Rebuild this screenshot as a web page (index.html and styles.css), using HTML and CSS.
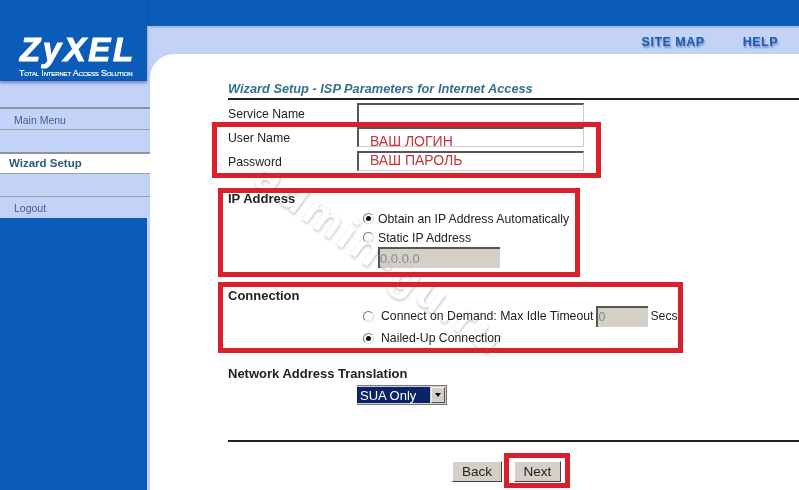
FILE: index.html
```html
<!DOCTYPE html>
<html lang="en">

<head>
    <meta charset="UTF-8">
    <meta name="viewport" content="width=device-width, initial-scale=1.0">
    <title>Wizard Setup</title>
    <link rel="stylesheet" href="styles.css">
</head>

<body>
    <div class="page">
        <aside class="side">
            <div class="logo">
                <div class="logoName">ZyXEL</div>
                <div class="logoSub">Total Internet Access Solution</div>
            </div>
            <div class="menu">
                <div class="item first">Main Menu</div>
                <div class="gap"></div>
                <div class="item current">Wizard Setup</div>
                <div class="gap"></div>
                <div class="item last">Logout</div>
            </div>
            <div class="sideFill"></div>
        </aside>

        <div class="right">
            <div class="topBar"></div>
            <div class="linkBar">
                <span class="topLink">SITE MAP</span>
                <span class="topLink">HELP</span>
            </div>
            <main class="content">
                <h1 class="title">Wizard Setup - ISP Parameters for Internet Access</h1>

                <div class="row rowService">
                    <span class="label">Service Name</span>
                    <div class="field"></div>
                </div>
                <div class="row">
                    <span class="label">User Name</span>
                    <div class="field note noteLow">ВАШ ЛОГИН</div>
                </div>
                <div class="row">
                    <span class="label">Password</span>
                    <div class="field note">ВАШ ПАРОЛЬ</div>
                </div>

                <h2 class="head headIp">IP Address</h2>
                <div class="options optionsIp">
                    <div class="opt"><span class="radio on"></span>Obtain an IP Address Automatically</div>
                    <div class="opt"><span class="radio"></span>Static IP Address</div>
                    <div class="grey greyIp">0.0.0.0</div>
                </div>

                <h2 class="head headConn">Connection</h2>
                <div class="options optionsConn">
                    <div class="opt optWide"><span class="radio"></span>Connect on Demand: Max Idle Timeout<span class="grey greyIdle">0</span>Secs</div>
                    <div class="opt optWide"><span class="radio on"></span>Nailed-Up Connection</div>
                </div>

                <h2 class="head headNat">Network Address Translation</h2>
                <div class="select">
                    <span class="selectValue">SUA Only</span>
                    <span class="selectBtn"></span>
                </div>

                <hr class="rule">

                <div class="buttons">
                    <button type="button" class="btn btnBack">Back</button>
                    <button type="button" class="btn btnNext">Next</button>
                </div>
            </main>
        </div>
    </div>

    <!-- annotations on top of the screenshot -->
    <div class="mark">admin-gu.ru</div>
    <div class="frame frameLogin"></div>
    <div class="frame frameIp"></div>
    <div class="frame frameConn"></div>
    <div class="frame frameNext"></div>
</body>

</html>
```

FILE: styles.css
```css
* {
    box-sizing: border-box;
}

html,
body {
    margin: 0;
    height: 490px;
    overflow: hidden;
    background: #fff;
}

body {
    font-family: "Liberation Sans", Arial, sans-serif;
    font-size: 12.25px;
    color: #222;
}

.page {
    display: flex;
    height: 490px;
}

/* left column */
.side {
    width: 150px;
    flex: none;
    display: flex;
    flex-direction: column;
    background: linear-gradient(#0a5cb8 26px, #c3d3f8 26px);
}

.logo {
    width: 147px;
    height: 81px;
    padding: 31px 0 0 20px;
    background: #0a5cb8;
    box-shadow: 0 2px 3px rgba(40, 60, 110, .5);
    color: #fff;
    position: relative;
}

.logoName {
    font-size: 33px;
    line-height: 37px;
    font-weight: bold;
    font-style: italic;
    letter-spacing: 2.6px;
    -webkit-text-stroke: 1px #fff;
}

.logoSub {
    font-size: 9px;
    line-height: 10px;
    font-variant: small-caps;
    text-transform: capitalize;
    letter-spacing: -.15px;
    white-space: nowrap;
    margin-left: -1px;
    -webkit-text-stroke: .2px #fff;
}

.menu {
    margin-top: 26px;
}

.item {
    height: 22px;
    line-height: 22px;
    padding-left: 14px;
    font-size: 10.5px;
    color: #3f5f8e;
    border-bottom: 1px solid #9a9fa8;
}

.first {
    height: 23px;
    border-top: 2px solid #8e939c;
}

.gap {
    height: 22px;
}

.current {
    height: 22px;
    padding-left: 9px;
    line-height: 19px;
    background: #fff;
    border-top: 2px solid #8e939c;
    font-size: 11.5px;
    font-weight: bold;
    color: #2a5a7c;
}

.last {
    height: 22px;
    border-top: 1px solid #9a9fa8;
    border-bottom: 0;
}

.sideFill {
    flex: 1;
    width: 147px;
    background: #0a5cb8;
}

/* right column */
.right {
    flex: 1;
    display: flex;
    flex-direction: column;
    background: #c3d3f8;
}

.topBar {
    height: 26px;
    background: #0a5cb8;
}

.linkBar {
    height: 28px;
    display: flex;
    justify-content: flex-end;
    align-items: center;
    gap: 38px;
    padding: 2px 21px 0 0;
    border-top: 2px solid #a9b8dc;
}

.topLink {
    font-size: 12.5px;
    font-weight: bold;
    color: #1c5cab;
    text-shadow: 1px 2px 2px rgba(30, 70, 140, .5);
    letter-spacing: .5px;
}

.content {
    flex: 1;
    padding: 27px 0 0 78px;
    background: #fff;
    border-top-left-radius: 24px;
}

.title {
    margin: 0;
    height: 19px;
    line-height: 16px;
    font-size: 12.8px;
    font-weight: bold;
    font-style: italic;
    color: #35708f;
    border-bottom: 2px solid #222;
    white-space: nowrap;
}

.row {
    display: flex;
    height: 24px;
}

.rowService {
    margin-top: 3px;
}

.label {
    width: 129px;
    flex: none;
    line-height: 23px;
}

.field {
    width: 227px;
    height: 20px;
    border: 1px solid #ccc;
    border-top: 2px solid #555;
    border-left: 2px solid #555;
}

.note {
    padding-left: 11px;
    font-size: 14px;
    line-height: 14px;
    color: #c4343c;
    white-space: nowrap;
}

.noteLow {
    line-height: 24px;
}

.head {
    margin: 0;
    font-size: 13px;
    line-height: 14px;
    font-weight: bold;
    color: #222;
}

.headIp {
    margin-top: 17px;
}

.options {
    padding-left: 129px;
}

.optionsIp {
    margin-top: 3px;
    height: 59px;
}

.opt {
    display: flex;
    align-items: center;
    height: 19px;
    white-space: nowrap;
}

.radio {
    width: 11px;
    height: 11px;
    margin: 0 4px 0 6px;
    flex: none;
    border-radius: 50%;
    border: 1px solid #777;
    border-right-color: #ddd;
    border-bottom-color: #ddd;
    background: #fff;
    display: flex;
    align-items: center;
    justify-content: center;
}

.radio.on::after {
    content: "";
    width: 5px;
    height: 5px;
    border-radius: 50%;
    background: #111;
}

.grey {
    background: #d4d0c8;
    border-top: 2px solid #555;
    border-left: 2px solid #555;
    color: #888;
}

.greyIp {
    width: 122px;
    height: 21px;
    margin-left: 21px;
    font-size: 13px;
    line-height: 19px;
}

.headConn {
    margin-top: 21px;
}

.optionsConn {
    margin-top: 2px;
}

.optWide {
    height: 22px;
}

.optWide .radio {
    margin-right: 7px;
}

.greyIdle {
    width: 52px;
    height: 21px;
    margin: 0 2px 0 3px;
    line-height: 19px;
}

.headNat {
    margin-top: 18px;
}

.select {
    display: flex;
    align-items: center;
    width: 90px;
    height: 20px;
    margin: 4px 0 0 129px;
    padding: 1px 1px 1px 0;
    background: #d4d0c8;
    border: 1px solid #777;
    border-left: 0;
}

.selectValue {
    flex: 1;
    height: 100%;
    padding-left: 3px;
    line-height: 17px;
    font-size: 13px;
    color: #fff;
    background: #0a246a;
}

.selectBtn {
    width: 14px;
    height: 100%;
    margin-left: 1px;
    background: #d4d0c8;
    border: 1px solid #555;
    border-top-color: #eee;
    border-left-color: #eee;
    position: relative;
}

.selectBtn::after {
    content: "";
    position: absolute;
    left: 3px;
    top: 5px;
    border: 3px solid transparent;
    border-top: 4px solid #000;
}

.rule {
    height: 2px;
    margin: 35px 0 0;
    border: 0;
    background: #222;
}

.buttons {
    display: flex;
    gap: 12px;
    margin: 19px 0 0 224px;
}

.btn {
    height: 21px;
    padding: 0;
    font-family: inherit;
    font-size: 13.5px;
    color: #222;
    background: #d4d0c8;
    border: 1px solid #fff;
    border-right-color: #444;
    border-bottom-color: #444;
}

.btnBack {
    width: 50px;
}

.btnNext {
    width: 47px;
}

/* red annotation frames */
.frame {
    position: absolute;
    border: 5px solid #d9202c;
}

.frameLogin {
    left: 212px;
    top: 122px;
    width: 389px;
    height: 56px;
}

.frameIp {
    left: 218px;
    top: 188px;
    width: 362px;
    height: 89px;
}

.frameConn {
    left: 218px;
    top: 282px;
    width: 465px;
    height: 71px;
}

.frameNext {
    left: 504px;
    top: 453px;
    width: 66px;
    height: 35px;
}

/* multiply so the form text stays readable under the watermark */
.mark {
    position: absolute;
    left: 232px;
    top: 233px;
    font-size: 44px;
    font-weight: bold;
    letter-spacing: 4px;
    color: #fff;
    text-shadow: 1px 1px 3px rgba(130, 130, 130, .55);
    transform: rotate(36deg);
    white-space: nowrap;
    mix-blend-mode: multiply;
    pointer-events: none;
}
```
